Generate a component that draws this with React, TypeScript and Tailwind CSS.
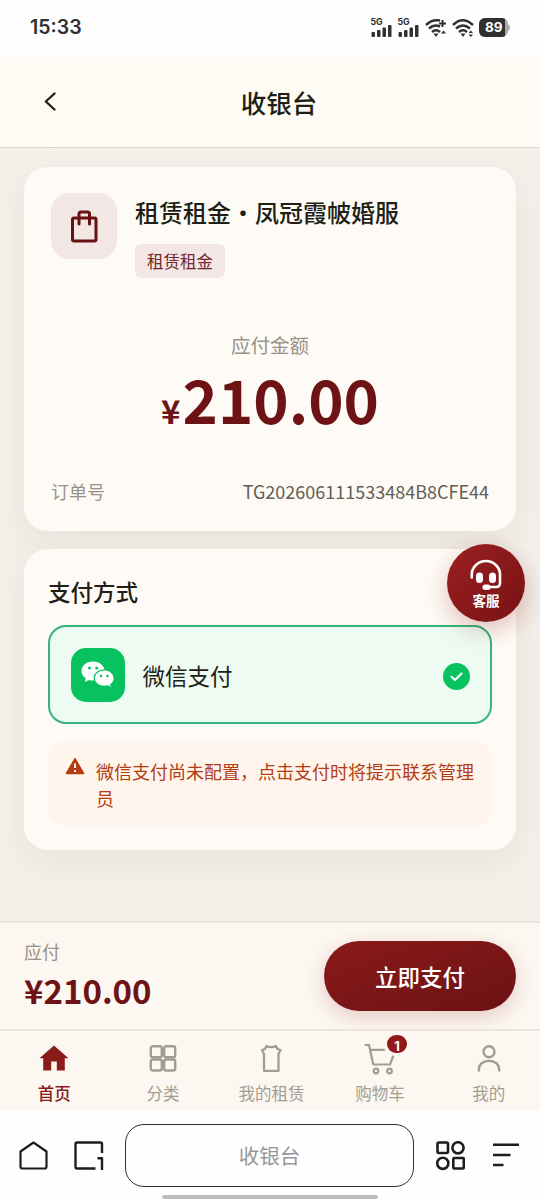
import type { ReactNode } from "react";

const stroke = { fill: "none", stroke: "currentColor", strokeLinecap: "round", strokeLinejoin: "round" } as const;

function Signal() {
  return (
    <svg width="22" height="20" viewBox="0 0 22 20" className="overflow-visible">
      <text x="-0.5" y="7.300" fontSize="8.8" fontWeight="700" fill="currentColor" fontFamily="Inter, sans-serif">5G</text>
      <g fill="currentColor">
        <rect x="0.500" y="14" width="3.500" height="5" rx="1" />
        <rect x="6" y="12" width="3.500" height="7" rx="1" />
        <rect x="11.500" y="9.500" width="3.500" height="9.500" rx="1" />
        <rect x="17" y="7" width="3.500" height="12" rx="1" />
      </g>
    </svg>
  );
}

function Wifi({ plus }: { plus?: boolean }) {
  return (
    <svg width="22" height="20" viewBox="0 0 22 20">
      <g {...stroke} strokeWidth="2.5" strokeLinecap="butt">
        <path d={plus ? "M1 7 Q7 1 15 2.500" : "M1 7 Q10.500 -2.500 21 7"} />
        <path d={plus ? "M4 10.5 Q9 6 15 8.500" : "M4 10.500 Q11 4.500 18 10.500"} />
        <path d="M7 14 Q11 10.500 15 14" />
        {plus && <path d="M17.500 2 V9 M14 5.500 H21" strokeWidth="2" />}
      </g>
      <path d="M8.500 15.500 h5 L11 19z" fill="currentColor" />
      {plus ? <path d="M16 15.500 L18.500 12.500 L21 15.500z" fill="currentColor" /> : <path d="M16.500 15 L18.800 12.500 L21 15z M16.500 16.500 L18.800 19 L21 16.500z" fill="currentColor" />}
    </svg>
  );
}

function StatusBar() {
  return (
    <div className="flex h-[57px] shrink-0 items-start justify-between bg-[#fefefe] pl-[30px] pr-[32px] text-[#303033]">
      <span className="mt-[13px] font-['Inter',sans-serif] text-[19.5px] leading-[28px] font-semibold">15:33</span>
      <div className="mt-[18px] flex">
        <div className="flex gap-[5px]">
          <Signal />
          <Signal />
          <Wifi plus />
          <Wifi />
        </div>
        <div className="relative ml-[5px] h-[20px] w-[29px]">
          <div className="absolute top-[6px] -right-[2px] h-[7px] w-[4px] rounded-r bg-[#aaa]" />
          <div className="relative h-[19px] w-[29px] overflow-hidden rounded-[6px] bg-[#aaa]">
            <div className="h-full w-[26px] bg-[#303033] pl-[6px] font-['Inter',sans-serif] text-[13.5px] leading-[19px] font-bold text-white">89</div>
          </div>
        </div>
      </div>
    </div>
  );
}

function WechatIcon() {
  return (
    <svg width="34" height="28" viewBox="0 0 34 28">
      <path d="M12 .5C5.400.5.500 4.700.500 10c0 3 1.600 5.600 4.300 7.300L3.700 21l4.200-2.100c1.300.4 2.700.5 4.100.5 6.500 0 11.500-4.100 11.500-9.400S18.500.5 12 .5z" fill="#fff" />
      <path d="M23.200 8.800c5.700 0 10 3.700 10 8.400 0 2.600-1.300 4.800-3.500 6.400l.8 3.100-3.600-1.800c-1.200.4-2.400.5-3.700.5-5.700 0-10-3.600-10-8.200s4.300-8.400 10-8.400z" fill="#fff" stroke="#08c25f" strokeWidth="1.200" />
      <g fill="#08c25f">
        <circle cx="8.500" cy="7" r="1.500" />
        <circle cx="15.700" cy="7" r="1.500" />
        <circle cx="20" cy="15" r="1.250" />
        <circle cx="26.500" cy="15" r="1.250" />
      </g>
    </svg>
  );
}

function HeadsetIcon() {
  return (
    <svg width="34" height="32" viewBox="0 0 34 32">
      <path {...stroke} strokeWidth="2.600" d="M2.800 18.500 V15.500 A14.100 13.500 0 0 1 31 15.500 V24 Q31 28 27 28 H19" />
      <rect x="7" y="13.500" width="7" height="10.500" rx="3.500" fill="currentColor" />
      <rect x="20" y="13.500" width="7" height="10.500" rx="3.500" fill="currentColor" />
      <rect x="13.500" y="25.500" width="8" height="5.500" rx="2.700" fill="currentColor" />
    </svg>
  );
}

const tabs: { label: string; icon: ReactNode; active?: boolean; badge?: number }[] = [
  {
    label: "首页",
    active: true,
    icon: <path d="M16 3.500 L30.500 16.300 H26.800 V28.500 H18.800 V19.500 H13.200 V28.500 H5.200 V16.300 H1.500z" fill="currentColor" />,
  },
  {
    label: "分类",
    icon: (
      <g {...stroke} strokeWidth="2.400">
        <rect x="3.800" y="4.300" width="11" height="11" rx="2" />
        <rect x="17.200" y="4.300" width="11" height="11" rx="2" />
        <rect x="3.800" y="17.500" width="11" height="11" rx="2" />
        <rect x="17.200" y="17.500" width="11" height="11" rx="2" />
      </g>
    ),
  },
  {
    label: "我的租赁",
    icon: <path {...stroke} strokeWidth="2.300" d="M11.500 4 C13.500 5.500 19 5.500 21 4 L22.300 6.800 L25.500 8 L23.500 12 V28.800 H9 V12 L7 8 L10.200 6.800z" />,
  },
  {
    label: "购物车",
    badge: 1,
    icon: (
      <g {...stroke} strokeWidth="2.200">
        <path d="M1.500 3 H5 L9.300 22.500 H26 L29 14.500 M6.500 7.800 H20" />
        <circle cx="12" cy="29" r="2.300" />
        <circle cx="25.500" cy="29" r="2.300" />
      </g>
    ),
  },
  {
    label: "我的",
    icon: (
      <g {...stroke} strokeWidth="2.400">
        <circle cx="16" cy="9.800" r="5.500" />
        <path d="M5.800 28.500 V27.500 C5.800 16 26.200 16 26.200 27.500 V28.500" />
      </g>
    ),
  },
];

function TabBar() {
  return (
    <nav className="flex h-[81px] shrink-0 border-t-2 border-[#ebe5df] bg-[#fcf7f1]">
      {tabs.map((t) => (
        <div key={t.label} className={`flex w-[108.6px] shrink-0 flex-col items-center pt-[11px] text-[16.5px] leading-[24px] ${t.active ? "font-medium text-[#8b1a1a]" : "text-[#a39d91]"}`}>
          <div className="relative">
            <svg width="32" height="32" viewBox="0 0 32 32" className="overflow-visible">{t.icon}</svg>
            {t.badge && <span className="absolute -top-[7px] left-[23px] h-[18px] w-[20px] rounded-full bg-[#921819] text-center font-['Inter',sans-serif] text-[13px] leading-[23px] font-bold text-white">{t.badge}</span>}
          </div>
          <span className="mt-[7px]">{t.label}</span>
        </div>
      ))}
    </nav>
  );
}

function BrowserBar() {
  return (
    <div className="relative flex h-[90px] shrink-0 bg-[#fefefe] pt-[14px] text-[#1d1d1f]">
      <svg width="30" height="30" viewBox="0 0 30 30" className="mt-[17px] ml-[19px]">
        <path {...stroke} strokeWidth="2.200" d="M14.500 1.500 L27.500 10.500 V25.500 Q27.500 27.500 25.500 27.500 H3.500 Q1.500 27.500 1.500 25.500 V10.500z" />
      </svg>
      <svg width="30" height="30" viewBox="0 0 30 30" className="mt-[17px] ml-[25px]">
        <path {...stroke} strokeWidth="2.400" strokeLinecap="butt" d="M28 12 V3 Q28 1.500 26.500 1.500 H3 Q1.500 1.500 1.500 3 V25.500 Q1.500 27.500 3 27.500 H21.500 M23.500 17.200 H28 V29" />
      </svg>
      <div className="ml-[21px] flex h-[63px] w-[289px] items-center justify-center rounded-[19px] border-[1.500px] border-[#303030] text-[20.5px] text-[#96969a]">收银台</div>
      <svg width="30" height="30" viewBox="0 0 30 30" className="mt-[17px] ml-[21px]">
        <g {...stroke} strokeWidth="2.600">
          <rect x="2.500" y="1.500" width="10.500" height="10.500" rx="1.500" />
          <circle cx="23" cy="6.800" r="5.600" />
          <circle cx="7.800" cy="22.300" r="5.600" />
          <rect x="18.300" y="17" width="10.500" height="10.500" rx="1" />
        </g>
      </svg>
      <svg width="28" height="30" viewBox="0 0 28 30" className="mt-[17px] ml-[28px]">
        <path stroke="currentColor" strokeWidth="2.600" d="M0 3.800 H26 M0 14 H17.500 M0 24 H10.500" />
      </svg>
      <div className="absolute bottom-[1px] left-[162px] h-[4px] w-[216px] rounded-full bg-[#bcbcbc]" />
    </div>
  );
}

export default function App() {
  return (
    <div className="relative flex h-[1200px] w-[540px] flex-col overflow-hidden bg-[#f3f0ea] font-['Noto_Sans_CJK_SC',sans-serif] text-[#211e15]">
      <StatusBar />

      <header className="flex h-[91px] shrink-0 items-center border-b border-[#dad5cf] bg-[#fefaf4]">
        <div className="w-[100px] pl-[42px]">
          <svg width="16" height="20" viewBox="0 0 16 20">
            <path {...stroke} strokeWidth="2.300" d="M12.500 1.500 L3.800 9.500 L12.500 17.500" />
          </svg>
        </div>
        <h1 className="flex-1 text-center text-[25.5px] leading-[36px] font-medium">收银台</h1>
        <div className="w-[82px]" />
      </header>

      <main className="flex flex-1 flex-col gap-[18px] px-6 pt-[19px]">
        {/* Order summary */}
        <section className="flex h-[364px] flex-col rounded-[24px] bg-[#fefbf6] px-[27px] shadow-[0_12px_36px_rgba(120,75,30,0.08)]">
          <div className="flex gap-[18px] pt-[26px]">
            <div className="flex h-[66px] w-[66px] items-center justify-center rounded-[18px] bg-[#f3e7e6] text-[#681012]">
              <svg width="30" height="34" viewBox="0 0 30 34" {...stroke} strokeWidth="3">
                <rect x="3.500" y="9" width="23.500" height="23" rx="1.500" />
                <path d="M10 15 V5 Q10 3 12 3 H18.500 Q20.500 3 20.500 5 V15" />
              </svg>
            </div>
            <div>
              <h2 className="mt-[2px] text-[24px] leading-[34px] font-medium whitespace-nowrap">租赁租金·凤冠霞帔婚服</h2>
              <span className="mt-[15px] inline-block h-[34px] rounded-[6px] bg-[#f3e7e6] px-[12px] text-[16.5px] leading-[34px] text-[#75252b]">租赁租金</span>
            </div>
          </div>
          <div className="mt-[24px] flex h-[155px] flex-col items-center border-y border-[#fbf7f2] pt-[28px]">
            <p className="text-[19.5px] leading-[28px] text-[#989287]">应付金额</p>
            <p className="mt-[11px] flex items-baseline leading-[56px] font-bold text-[#6e1315]">
              <span className="mr-[2px] text-[33px]">¥</span>
              <span className="text-[60px]">210.00</span>
            </p>
          </div>
          <div className="mt-[20px] flex justify-between text-[18px] leading-[28px]">
            <span className="text-[#989287]">订单号</span>
            <span className="text-[#625e55]">TG202606111533484B8CFE44</span>
          </div>
        </section>

        {/* Payment method */}
        <section className="h-[301px] rounded-[24px] bg-[#fefbf6] px-6 pt-[25px] shadow-[0_12px_36px_rgba(120,75,30,0.08)]">
          <h3 className="text-[22.5px] leading-[34px] font-medium">支付方式</h3>
          <div className="mt-[17px] flex h-[99px] items-center rounded-[18px] border-2 border-[#35b47b] bg-[#edfbf3] px-[20.5px]">
            <div className="flex h-[54px] w-[54px] items-center justify-center rounded-[15px] bg-[#08c25f]">
              <WechatIcon />
            </div>
            <span className="mt-[2px] ml-[18px] flex-1 text-[22.5px]">微信支付</span>
            <svg width="27" height="27" viewBox="0 0 27 27" className="mt-[3px]">
              <circle cx="13.500" cy="13.500" r="13.500" fill="#08c25f" />
              <path d="M8.500 13.800 L12 17 L18.500 10.500" fill="none" stroke="#fff" strokeWidth="2.200" strokeLinecap="round" strokeLinejoin="round" />
            </svg>
          </div>
          <div className="mt-[18px] flex h-[84px] gap-[11px] rounded-[15px] bg-[#fff5ed] pt-[16px] pr-[15px] pl-[17px] text-[#b43c10]">
            <svg width="20" height="18" viewBox="0 0 20 18" className="-mt-[1px] shrink-0">
              <path d="M10 2 L18.300 16.300 H1.700z" fill="currentColor" stroke="currentColor" strokeWidth="1.800" strokeLinejoin="round" />
              <path d="M10 6.500 V11 M10 13 V15" stroke="#fff5ed" strokeWidth="2" />
            </svg>
            <p className="text-[18px] leading-[27px] break-all">微信支付尚未配置，点击支付时将提示联系管理员</p>
          </div>
        </section>
      </main>

      {/* Pay bar */}
      <div className="flex h-[108px] shrink-0 items-center justify-between border-t-2 border-[#eae4dc] bg-[#fcf7f1] px-6">
        <div>
          <p className="text-[18px] leading-[26px] text-[#989287]">应付</p>
          <p className="mt-[4px] mb-[2px] text-[33px] leading-[44px] font-bold text-[#6e1315]">¥210.00</p>
        </div>
        <button className="h-[70px] w-[192px] rounded-full bg-linear-to-br from-[#8b1a1a] to-[#6b1214] pt-[2px] text-[22.5px] font-medium text-white shadow-[0_6px_20px_rgba(139,26,26,0.2)]">立即支付</button>
      </div>
      <TabBar />
      <BrowserBar />

      <button className="absolute top-[544px] left-[447px] flex h-[78px] w-[78px] flex-col items-center rounded-full bg-linear-to-br from-[#9b2021] to-[#781214] pt-[15px] text-white shadow-[0_8px_24px_rgba(139,26,26,0.27)]">
        <HeadsetIcon />
        <span className="text-[13.5px] leading-[18px] font-bold">客服</span>
      </button>
    </div>
  );
}
